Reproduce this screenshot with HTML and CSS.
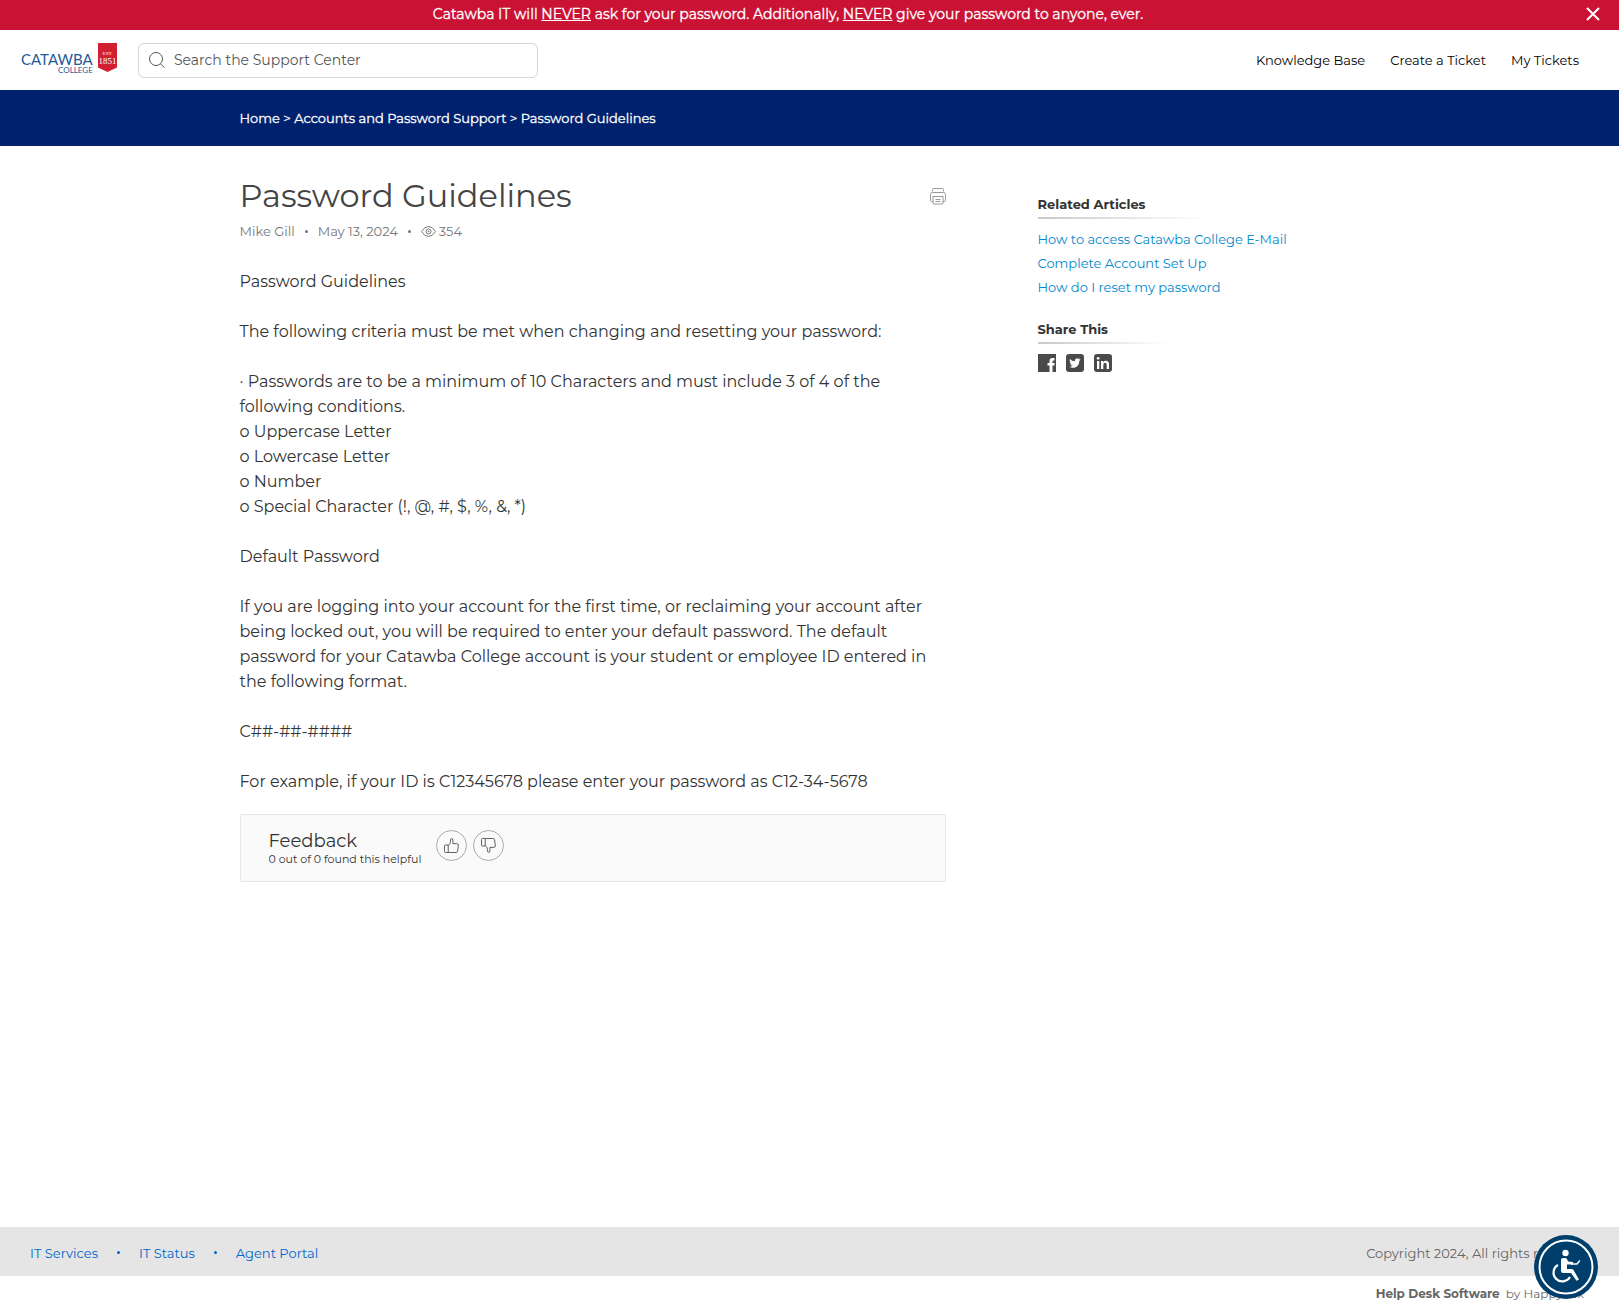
FILE: index.html
```html
<!DOCTYPE html>
<html lang="en">
<head>
<meta charset="utf-8">
<meta name="viewport" content="width=device-width, initial-scale=1">
<title>Password Guidelines</title>
<link rel="stylesheet" href="styles.css">
</head>
<body>
<div class="banner">
  <p class="banner-text">Catawba IT will <u>NEVER</u> ask for your password. Additionally, <u>NEVER</u> give your password to anyone, ever.</p>
  <button class="banner-close" type="button" aria-label="Dismiss">
    <svg width="14" height="14" viewBox="0 0 14 14" fill="none" stroke="#fff" stroke-width="2"><path d="M1 1l12 12M13 1L1 13"/></svg>
  </button>
</div>
<header class="header">
  <a class="logo" href="#" aria-label="Catawba College">
    <svg width="96" height="34" viewBox="0 0 96 34">
      <text class="logo-name" x="0" y="22" font-size="15">CATAWBA</text>
      <text class="logo-name" x="37" y="30" font-size="8">COLLEGE</text>
      <path d="M77 0h19v24.500l-9.500 4.500-9.500-4.500z" fill="#d11f31"/>
      <text class="logo-year" x="86.500" y="12" font-size="5">EST.</text>
      <text class="logo-year" x="86.500" y="21" font-size="9">1851</text>
    </svg>
  </a>
  <form class="search">
    <svg width="16" height="17" viewBox="0 0 16 17" fill="none" stroke="#555"><circle cx="7" cy="7" r="6.500"/><path d="M11.500 11.800l4 4"/></svg>
    <input type="search" placeholder="Search the Support Center" aria-label="Search the Support Center">
  </form>
  <nav class="nav">
    <a href="#">Knowledge Base</a>
    <a href="#">Create a Ticket</a>
    <a href="#">My Tickets</a>
  </nav>
</header>
<nav class="crumbs" aria-label="Breadcrumb">
  <div class="container"><a href="#">Home</a> &gt; <a href="#">Accounts and Password Support</a> &gt; <a href="#">Password Guidelines</a></div>
</nav>
<main class="container main">
  <article class="article">
    <div class="title-row">
      <h1>Password Guidelines</h1>
      <button class="print" type="button" aria-label="Print">
        <svg width="16" height="17" viewBox="0 0 16 17" fill="none" stroke="#999"><path d="M2.500 3.500v-2q0-1 1-1h9q1 0 1 1v2M3 13.500H1.500q-1 0-1-1v-6q0-2 2-2h11q2 0 2 2v6q0 1-1 1H13M3 8.500h10v6.500q0 1-1 1H4q-1 0-1-1zM5.500 11.500h5M5.500 13.500h5"/></svg>
      </button>
    </div>
    <div class="meta">
      <span>Mike Gill</span><span class="dot"></span><span>May 13, 2024</span><span class="dot"></span>
      <span class="views"><svg width="15" height="11" viewBox="0 0 15 11" fill="none" stroke="#777"><path d="M.5 5.500Q3.500.5 7.500.5t7 5q-3 5-7 5t-7-5z"/><circle cx="7.500" cy="5.500" r="2.500"/><circle cx="7.500" cy="5.500" r=".5"/></svg>354</span>
    </div>
    <div class="content">
      <p>Password Guidelines</p>
      <p>The following criteria must be met when changing and resetting your password:</p>
      <p>· Passwords are to be a minimum of 10 Characters and must include 3 of 4 of the following conditions.<br>o Uppercase Letter<br>o Lowercase Letter<br>o Number<br>o Special Character (!, @, #, $, %, &amp;, *)</p>
      <p>Default Password</p>
      <p>If you are logging into your account for the first time, or reclaiming your account after being locked out, you will be required to enter your default password. The default password for your Catawba College account is your student or employee ID entered in the following format.</p>
      <p>C##-##-####</p>
      <p>For example, if your ID is C12345678 please enter your password as C12-34-5678</p>
    </div>
    <section class="feedback">
      <div>
        <h2>Feedback</h2>
        <p>0 out of 0 found this helpful</p>
      </div>
      <div class="votes">
        <button type="button" aria-label="Helpful"><svg width="15" height="15" viewBox="0 0 16 16" fill="none" stroke="#555"><path id="thumb" d="M1.500 7.500h3v8h-3q-1 0-1-1v-6q0-1 1-1zM4.500 8Q7 6 7 3.500V2q0-1.500 1.200-1.500T9.500 2.500V6h4q1.800 0 1.800 1.600L14.500 14q-.2 1.500-1.500 1.500H4.500"/></svg></button>
        <button type="button" aria-label="Not helpful"><svg width="15" height="15" viewBox="0 0 16 16" fill="none" stroke="#555"><use href="#thumb" transform="matrix(1 0 0 -1 0 16)"/></svg></button>
      </div>
    </section>
  </article>
  <aside class="aside">
    <section>
      <h3>Related Articles</h3>
      <ul>
        <li><a href="#">How to access Catawba College E-Mail</a></li>
        <li><a href="#">Complete Account Set Up</a></li>
        <li><a href="#">How do I reset my password</a></li>
      </ul>
    </section>
    <section>
      <h3>Share This</h3>
      <div class="share">
        <a href="#" aria-label="Facebook"><svg width="18" height="18" viewBox="0 0 18 18"><path fill="#4a4a4a" d="M0 0h18v18h-3.500v-6.500h2V9h-2V7.500q0-1 1-1h1V4h-2q-3 0-3 3v2H9.500v2.500h2V18H0z"/></svg></a>
        <a href="#" aria-label="Twitter"><svg width="18" height="18" viewBox="0 0 18 18"><rect width="18" height="18" rx="3" fill="#4a4a4a"/><path fill="#fff" d="M14.500 5.400l-1.300.4q.7-.4.900-1.200l-1.400.5a2.300 2.300 0 0 0-3.900 2.100Q5.900 7.100 4 4.900q-1.100 2 .7 3.200l-1-.3q0 1.800 1.800 2.300l-1 .1q.5 1.500 2.200 1.600-1.400 1.100-3.400 1 1.500 1 3.500 1c4.300 0 6.700-3.500 6.500-7.100q.8-.6 1.200-1.300z"/></svg></a>
        <a href="#" aria-label="LinkedIn"><svg width="18" height="18" viewBox="0 0 18 18"><rect width="18" height="18" rx="3" fill="#4a4a4a"/><path fill="#fff" d="M3 7h2.300v8H3zM7 7h2.200v1.200Q10 6.800 11.800 6.800 15 6.800 15 10.500V15h-2.300v-4q0-2.200-1.600-2.200T9.300 11v4H7z"/><circle cx="4.150" cy="4.300" r="1.400" fill="#fff"/></svg></a>
      </div>
    </section>
  </aside>
</main>
<footer>
  <div class="footer-bar">
    <nav class="footer-nav" aria-label="Footer">
      <a href="#">IT Services</a><span class="dot"></span><a href="#">IT Status</a><span class="dot"></span><a href="#">Agent Portal</a>
    </nav>
    <p>Copyright 2024, All rights reserved</p>
  </div>
  <p class="powered"><b>Help Desk Software</b> by HappyFox</p>
</footer>
<button class="access" type="button" aria-label="Accessibility options">
  <svg width="64" height="64" viewBox="0 0 64 64" fill="none" stroke="#fff"><circle cx="32" cy="32" r="32" fill="#003e6b" stroke="none"/><circle cx="32" cy="32" r="26.500" stroke-width="2"/><circle cx="31.500" cy="18" r="3.200" fill="#fff" stroke="none"/><path d="M27 25q0-2 2-2h2q2 0 2.400 2l.6 1.500 5 .5v2.500L33 29.500V34h4.500q1.500 0 2 1l5.500 9.500-2.500 1.300L37 38h-8q-2 0-2-2z" fill="#fff" stroke="none"/><path d="M37 29h6l2.800-3.500" stroke-width="1.500"/><path d="M24 30a8.800 8.800 0 1 0 12 12" stroke-width="2.200"/></svg>
</button>
</body>
</html>
```
FILE: styles.css
```css
* { box-sizing: border-box; }
body {
  margin: 0;
  min-height: 100vh;
  display: flex;
  flex-direction: column;
  font: 13px/24px Montserrat, Inter, "Open Sans", sans-serif;
  color: #333;
  background: #fff;
}
h1, h2, h3, p, ul { margin: 0; padding: 0; font-weight: 400; }
ul { list-style: none; }
a { color: inherit; text-decoration: none; }
button { padding: 0; border: 0; background: none; cursor: pointer; }
svg { display: block; }

.banner { display: flex; align-items: center; height: 30px; padding: 0 19px 2px 0; background: #ca1235; color: #fff; }
.banner-text { flex: 1; padding-right: 10px; font-size: 14px; text-align: center; -webkit-text-stroke: 0.3px; }
.banner-close { width: 14px; }

.header { display: flex; align-items: center; height: 60px; padding: 0 40px 0 21px; }
.logo { width: 117px; }
.logo-name { font-family: Lato, sans-serif; fill: #1f5a99; }
.logo-year { font-family: "Liberation Serif", serif; fill: #fff; text-anchor: middle; }
.search { display: flex; align-items: center; gap: 9px; width: 400px; height: 35px; padding: 0 10px; border: 1px solid #d5d5d5; border-radius: 6px; }
.search input { flex: 1; min-width: 0; padding: 0; border: 0; outline: 0; background: none; font: inherit; font-size: 14px; color: #555; }
.search input::placeholder { color: #555; opacity: 1; }
.nav { display: flex; gap: 25px; margin-left: auto; color: #000; }

.container { width: 100%; max-width: 1140px; margin: 0 auto; }
.crumbs { height: 56px; padding-top: 16px; background: #00216d; color: #fff; -webkit-text-stroke: 0.3px; }

.main { display: flex; flex: 1; gap: 92px; padding-top: 28px; }
.article { flex: 0 1 706px; }
.title-row { display: flex; align-items: center; justify-content: space-between; height: 44px; }
h1 { font-size: 32px; line-height: 44px; color: #444; }
.print { padding-top: 1px; }
.meta { display: flex; align-items: center; height: 26px; color: #777; }
.dot { width: 3px; height: 3px; border-radius: 50%; background: currentColor; }
.meta .dot { margin: 0 10px; }
.views { display: flex; align-items: center; gap: 3px; }
.content { padding-top: 25px; font-size: 16px; line-height: 25px; }
.content p { margin-bottom: 25px; }
.feedback { display: flex; align-items: flex-start; gap: 15px; height: 68px; margin-top: -5px; padding: 15px 28px; border: 1px solid #e7e7e7; border-radius: 2px; background: #fafafa; }
.feedback h2 { font-size: 18px; line-height: 22px; }
.feedback p { font-size: 11px; line-height: 14px; }
.votes { display: flex; gap: 6px; }
.votes button { display: grid; place-items: center; width: 31px; height: 31px; border: 1px solid #aaa; border-radius: 50%; }

.aside { flex: 1; padding-top: 18px; }
.aside section { margin-bottom: 18px; }
h3 { width: fit-content; padding: 0 60px 1px 0; margin-bottom: 8px; font-size: 13px; line-height: 24px; font-weight: 700; border-bottom: 2px solid; border-image: linear-gradient(to right, #c8c8c8, #fff) 1; }
.aside li { color: #0088cc; }
.share { display: flex; gap: 10px; padding-top: 2px; }

.footer-bar { display: flex; align-items: center; justify-content: space-between; height: 49px; padding: 2px 30px 0 30px; background: #e5e5e5; color: #666; }
.footer-nav { display: flex; align-items: center; gap: 19px; color: #0066cc; }
.powered { height: 36px; padding: 6px 35px 0 0; font-size: 12px; text-align: right; color: #666; }
.powered b { margin-right: 3px; }
.access { position: fixed; right: 21px; bottom: 13px; }
```
